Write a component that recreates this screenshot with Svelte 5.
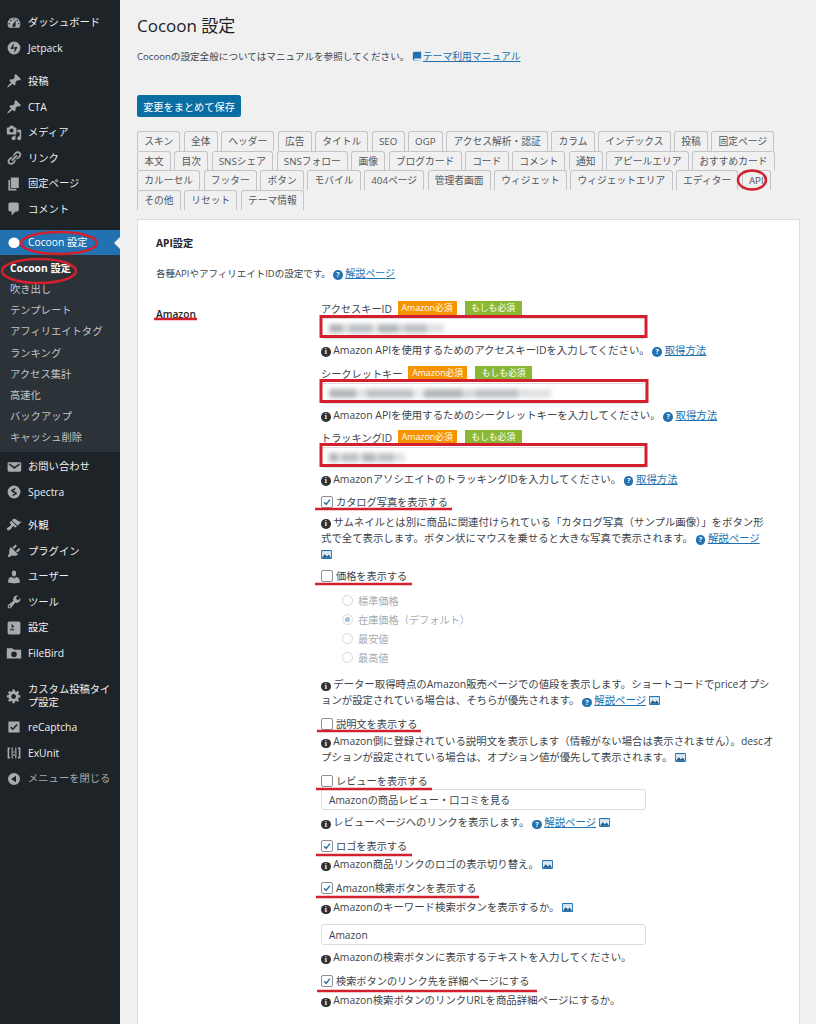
<script>
  const icons = {
    dash: 'M3.76 16h12.48c1.1-1.37 1.76-3.11 1.76-5 0-4.42-3.58-8-8-8s-8 3.58-8 8c0 1.89.66 3.63 1.76 5zM10 4c.55 0 1 .45 1 1s-.45 1-1 1-1-.45-1-1 .45-1 1-1zM6 6c.55 0 1 .45 1 1s-.45 1-1 1-1-.45-1-1 .45-1 1-1zm8 0c.55 0 1 .45 1 1s-.45 1-1 1-1-.45-1-1 .45-1 1-1zm-5.37 5.55L12 7v6c0 1.1-.9 2-2 2s-2-.9-2-2c0-.57.24-1.08.63-1.45zM4 10c.55 0 1 .45 1 1s-.45 1-1 1-1-.45-1-1 .45-1 1-1zm12 0c.55 0 1 .45 1 1s-.45 1-1 1-1-.45-1-1 .45-1 1-1z',
    jet: 'M10 2a8 8 0 1 0 0 16 8 8 0 0 0 0-16zM9.4 11.2H5.6l3.8-7.4zM10.6 16.2V8.8h3.8z',
    pin: 'M10.44 3.02l1.82-1.82 6.36 6.35-1.83 1.82c-1.05-.68-2.48-.57-3.41.36l-.75.75c-.92.93-1.04 2.35-.35 3.41l-1.83 1.82-2.41-2.41-2.8 2.79c-.42.42-3.38 2.71-3.8 2.29s1.86-3.39 2.28-3.81l2.79-2.79L4.1 9.36l1.83-1.82c1.05.69 2.48.57 3.4-.36l.75-.75c.93-.92 1.05-2.35.36-3.41z',
    media: 'M13 11V4c0-.55-.45-1-1-1h-1.67L9 1H5L3.67 3H2c-.55 0-1 .45-1 1v7c0 .55.45 1 1 1h10c.55 0 1-.45 1-1zM7 4.5c1.38 0 2.5 1.12 2.5 2.5S8.38 9.5 7 9.5 4.5 8.38 4.5 7 5.62 4.5 7 4.5zM14 6h5v10.5c0 1.38-1.12 2.5-2.5 2.5S14 17.88 14 16.5s1.12-2.5 2.5-2.5c.17 0 .34.02.5.05V9h-3V6zm-4 8.05V13h2v3.5c0 1.38-1.12 2.5-2.5 2.5S7 17.88 7 16.5 8.12 14 9.5 14c.17 0 .34.02.5.05z',
    link: 'M17.74 2.76c1.68 1.69 1.68 4.41 0 6.1l-1.53 1.52c-1.12 1.12-2.7 1.47-4.14 1.09l2.62-2.61.76-.77.76-.76c.84-.84.84-2.2 0-3.04-.84-.85-2.2-.85-3.04 0l-.77.76-3.38 3.38c-.37-1.44-.02-3.02 1.1-4.14l1.52-1.53c1.69-1.68 4.42-1.68 6.1 0zM8.59 13.43l5.34-5.34c.42-.42.42-1.1 0-1.52-.44-.43-1.13-.39-1.53 0l-5.33 5.34c-.42.42-.42 1.1 0 1.52.44.43 1.13.39 1.52 0zm-.76 2.29l4.14-4.15c.38 1.44.03 3.02-1.09 4.14l-1.52 1.53c-1.69 1.68-4.41 1.68-6.1 0-1.68-1.68-1.68-4.42 0-6.1l1.53-1.52c1.12-1.12 2.7-1.47 4.14-1.1l-4.14 4.15c-.85.84-.85 2.2 0 3.05.84.84 2.2.84 3.04 0z',
    page: 'M6 15V2h10v13H6zm-1 1h8v2H3V5h2v11z',
    comment: 'M5 2h9c1.1 0 2 .9 2 2v7c0 1.1-.9 2-2 2h-2l-5 5v-5H5c-1.1 0-2-.9-2-2V4c0-1.1.9-2 2-2z',
    dot: 'M10 3a7 6.6 0 1 0 0 13.2A7 6.6 0 0 0 10 3z',
    mail: 'M3.87 4h13.25C18.37 4 19 4.59 19 5.79v8.42c0 1.19-.63 1.79-1.88 1.79H3.87c-1.25 0-1.88-.6-1.88-1.79V5.79c0-1.2.63-1.79 1.88-1.79zm6.62 8.6l6.74-5.53c.24-.2.43-.66.13-1.07-.29-.41-.82-.42-1.17-.17l-5.7 3.86L4.8 5.83c-.35-.25-.88-.24-1.17.17-.3.41-.11.87.13 1.07z',
    spectra: 'M10 2a8 8 0 1 0 0 16 8 8 0 0 0 0-16zM6.5 9.2V7.4l5.2-2.7v2.1L9 8.2l4.5 2.6v1.8l-5.2 2.7v-2.1l2.7-1.4z',
    brush: 'M14.48 11.06L7.41 3.99l1.5-1.5c.5-.56 2.3-.47 3.51.32 1.21.8 1.43 1.28 2.91 2.1 1.18.64 2.45 1.26 4.45.85zm-.71.71L6.7 4.7 4.93 6.47c-.39.39-.39 1.02 0 1.41l1.06 1.06c.39.39.39 1.03 0 1.42-.6.6-1.43 1.11-2.21 1.69-.35.26-.7.53-1.01.84C1.43 13.23.4 14.84 1.7 16.14c1.3 1.3 2.91.27 4.25-1.07.31-.31.58-.66.84-1.01.58-.78 1.09-1.61 1.69-2.21.39-.39 1.03-.39 1.42 0l1.06 1.06c.39.39 1.02.39 1.41 0z',
    plug: 'M13.11 4.36L9.87 7.6 8 5.73l3.24-3.24c.35-.34 1.05-.2 1.56.32.52.51.66 1.21.31 1.55zm-8 1.77l.91-1.12 9.01 9.01-1.19.84c-.71.71-2.63 1.16-3.82 1.16H6.14L4.9 17.26c-.59.59-1.54.59-2.12 0-.59-.58-.59-1.53 0-2.12l1.24-1.24v-3.88c0-1.13.4-3.19 1.09-3.89zm7.26 3.97l3.24-3.24c.34-.35 1.04-.21 1.55.31.52.51.66 1.21.31 1.55l-3.24 3.25z',
    user: 'M10 9.25c-2.27 0-2.73-3.44-2.73-3.44C7 4.02 7.82 2 9.97 2c2.16 0 2.98 2.02 2.71 3.81 0 0-.41 3.44-2.68 3.44zm0 2.57L12.72 10c2.39 0 4.52 2.33 4.52 4.53v2.49s-3.65 1.13-7.24 1.13c-3.65 0-7.24-1.13-7.24-1.13v-2.49c0-2.25 1.94-4.48 4.47-4.48z',
    tool: 'M16.68 9.77c-1.34 1.34-3.3 1.67-4.95.99l-5.41 6.52c-.99.99-2.59.99-3.58 0s-.99-2.59 0-3.57l6.52-5.42c-.68-1.65-.35-3.61.99-4.95 1.28-1.28 3.12-1.62 4.72-1.06l-2.89 2.89 2.82 2.82 2.86-2.87c.53 1.58.18 3.39-1.08 4.65zM3.81 16.21c.4.39 1.04.39 1.43 0 .4-.4.4-1.04 0-1.43-.39-.4-1.03-.4-1.43 0-.39.39-.39 1.03 0 1.43z',
    set: 'M18 16V4c0-1.1-.9-2-2-2H4c-1.1 0-2 .9-2 2v12c0 1.1.9 2 2 2h12c1.1 0 2-.9 2-2zM8 11h1c.55 0 1 .45 1 1s-.45 1-1 1H8v1.5c0 .28-.22.5-.5.5s-.5-.22-.5-.5V13H6c-.55 0-1-.45-1-1s.45-1 1-1h1V5.5c0-.28.22-.5.5-.5s.5.22.5.5V7h1c.55 0 1 .45 1 1s-.45 1-1 1h-1v5.5c0 .28-.22.5-.5.5s-.5-.22-.5-.5V9z',
    folder: 'M1 4h7l2 2h9v11H1zM10 8a3.5 3.5 0 1 0 0 7 3.5 3.5 0 0 0 0-7z',
    gear: 'M18 12h-2.18c-.17.7-.44 1.35-.81 1.93l1.54 1.54-2.1 2.1-1.54-1.54c-.58.36-1.23.63-1.91.79V19H8v-2.18c-.68-.16-1.33-.43-1.91-.79l-1.54 1.54-2.12-2.12 1.54-1.54c-.36-.58-.63-1.23-.79-1.91H1V9.03h2.17c.16-.7.44-1.35.8-1.94L2.43 5.55l2.1-2.1 1.54 1.54c.58-.37 1.24-.64 1.93-.81V2h3v2.18c.68.16 1.33.43 1.91.79l1.54-1.54 2.12 2.12-1.54 1.54c.36.59.64 1.24.8 1.94H18V12zm-8.5 1.5c1.66 0 3-1.34 3-3s-1.34-3-3-3-3 1.34-3 3 1.34 3 3 3z',
    check: 'M3 3h14v14H3zM8.6 14.2l6-6.6-1.4-1.3-4.7 5.2-2-2-1.3 1.3z',
    ex: 'M2 3h3v2H4v10h1v2H2zM18 3h-3v2h1v10h-1v2h3zM7 3h1.5v14H7zM11.5 3H13v14h-1.500zM8 8h4v1.500H8zM8 12h4v1.500H8z',
    close: 'M10 2.5a7.500 7.500 0 1 0 0 15 7.500 7.500 0 0 0 0-15zM12.500 14l-6-4 6-4z'
  };
  const top1 = [['dash','ダッシュボード'],['jet','Jetpack']];
  const top2 = [['pin','投稿'],['pin','CTA'],['media','メディア'],['link','リンク'],['page','固定ページ'],['comment','コメント']];
  const subs = ['吹き出し','テンプレート','アフィリエイトタグ','ランキング','アクセス集計','高速化','バックアップ','キャッシュ削除'];
  const top3 = [['mail','お問い合わせ'],['spectra','Spectra']];
  const top4 = [['brush','外観'],['plug','プラグイン'],['user','ユーザー'],['tool','ツール'],['set','設定'],['folder','FileBird']];
  const top5 = [['check','reCaptcha'],['ex','ExUnit']];
  const tabs = ['スキン','全体','ヘッダー','広告','タイトル','SEO','OGP','アクセス解析・認証','カラム','インデックス','投稿','固定ページ','本文','目次','SNSシェア','SNSフォロー','画像','ブログカード','コード','コメント','通知','アピールエリア','おすすめカード','カルーセル','フッター','ボタン','モバイル','404ページ','管理者画面','ウィジェット','ウィジェットエリア','エディター','API','その他','リセット','テーマ情報'];
  const radios = ['標準価格','在庫価格（デフォルト）','最安値','最高値'];
  const underlines = [[154,319,197],[315,509,452],[315,584,412],[317,731,421],[316,789,432],[316,855,412],[316,897,479],[317,991,537]];
</script>

{#snippet menu(list)}
  {#each list as [ic, label]}
    <div class="item"><svg class="mi" viewBox="0 0 20 20"><path fill-rule="evenodd" d={icons[ic]} /></svg><span>{label}</span></div>
  {/each}
{/snippet}
{#snippet info()}<span class="info">i</span>{/snippet}
{#snippet q(t)}<span class="qm">?</span> <a href="#top">{t}</a>{/snippet}
{#snippet pic()}<svg class="pic" viewBox="0 0 12 10"><rect width="12" height="10" rx="1" fill="#2271b1" /><rect x="1" y="1.200" width="10" height="7.500" fill="#dbe9f3" /><path d="M1 8.700l3-4 2.500 2.500L8.500 5l2.500 3.700z" fill="#1a5a8c" /></svg>{/snippet}
{#snippet check(label, on)}
  <div class="check"><span class="box">{#if on}<svg viewBox="0 0 12 12"><path d="M2.500 6.200l2.500 2.600 4.500-5.600" fill="none" stroke="#2271b1" stroke-width="1.700" /></svg>{/if}</span>{label}</div>
{/snippet}
{#snippet badges()}<span class="badge orange">Amazon必須</span><span class="badge green">もしも必須</span>{/snippet}

<div class="page">
  <nav class="side">
    <div class="grp first">{@render menu(top1)}</div>
    <div class="grp">{@render menu(top2)}</div>
    <div class="grp">
      <div class="item current"><svg class="mi" viewBox="0 0 20 20"><path d={icons.dot} /></svg><span>Cocoon 設定</span><i class="arrow"></i></div>
      <div class="sub">
        <div class="subitem on">Cocoon 設定</div>
        {#each subs as s}<div class="subitem">{s}</div>{/each}
      </div>
    </div>
    <div class="grp tight">{@render menu(top3)}</div>
    <div class="grp">{@render menu(top4)}</div>
    <div class="grp last">
      <div class="item two"><svg class="mi" viewBox="0 0 20 20"><path fill-rule="evenodd" d={icons.gear} /></svg><span>カスタム投稿タイプ設定</span></div>
      {@render menu(top5)}
      <div class="item dim"><svg class="mi" viewBox="0 0 20 20"><path fill-rule="evenodd" d={icons.close} /></svg><span>メニューを閉じる</span></div>
    </div>
  </nav>

  <main class="main">
    <h1>Cocoon 設定</h1>
    <p class="lead">Cocoonの設定全般についてはマニュアルを参照してください。 <svg class="book" viewBox="0 0 12 12"><path d="M3 1h8v8H3.500C2.700 9 2.500 9.500 2.500 10s.3 1 1 1H11v.5H3C2 11.500 1 11 1 9.800V3c0-1.200 1-2 2-2z" fill="#2271b1" /></svg><a href="#top">テーマ利用マニュアル</a></p>
    <button class="save">変更をまとめて保存</button>
    <div class="tabs">
      {#each tabs as t}<span class="tab">{t}</span>{/each}
    </div>
    <section class="card">
      <h2>API設定</h2>
      <p class="intro">各種APIやアフィリエイトIDの設定です。 {@render q('解説ページ')}</p>
      <div class="grid">
        <div class="th">Amazon</div>
        <div class="col">
          <div class="lab">アクセスキーID {@render badges()}</div>
          <div class="input"><i class="blur b1"></i></div>
          <div class="help h3">{@render info()} Amazon APIを使用するためのアクセスキーIDを入力してください。 {@render q('取得方法')}</div>
          <div class="lab m8">シークレットキー {@render badges()}</div>
          <div class="input"><i class="blur b2"></i></div>
          <div class="help h3">{@render info()} Amazon APIを使用するためのシークレットキーを入力してください。 {@render q('取得方法')}</div>
          <div class="lab m7">トラッキングID {@render badges()}</div>
          <div class="input"><i class="blur b3"></i></div>
          <div class="help h3">{@render info()} AmazonアソシエイトのトラッキングIDを入力してください。 {@render q('取得方法')}</div>

          <div class="m7">{@render check('カタログ写真を表示する', true)}</div>
          <div class="help h4">{@render info()} サムネイルとは別に商品に関連付けられている「カタログ写真（サンプル画像）」をボタン形<br />式で全て表示します。ボタン状にマウスを乗せると大きな写真で表示されます。 {@render q('解説ページ')}<br />{@render pic()}</div>

          <div class="m6">{@render check('価格を表示する', false)}</div>
          <div class="radios">
            {#each radios as r, i}
              <div class="radio"><span class="rd" class:sel={i === 1}></span>{r}</div>
            {/each}
          </div>
          <div class="help h9">{@render info()} データー取得時点のAmazon販売ページでの値段を表示します。ショートコードでpriceオプシ<br />ョンが設定されている場合は、そちらが優先されます。 {@render q('解説ページ')} {@render pic()}</div>

          <div class="m8">{@render check('説明文を表示する', false)}</div>
          <div class="help h1">{@render info()} Amazon側に登録されている説明文を表示します（情報がない場合は表示されません）。descオ<br />プションが設定されている場合は、オプション値が優先して表示されます。 {@render pic()}</div>

          <div class="m8">{@render check('レビューを表示する', false)}</div>
          <div class="input tight">Amazonの商品レビュー・口コミを見る</div>
          <div class="help h4">{@render info()} レビューページへのリンクを表示します。 {@render q('解説ページ')} {@render pic()}</div>

          <div class="m8">{@render check('ロゴを表示する', true)}</div>
          <div class="help h2">{@render info()} Amazon商品リンクのロゴの表示切り替え。 {@render pic()}</div>

          <div class="m8">{@render check('Amazon検索ボタンを表示する', true)}</div>
          <div class="help h3">{@render info()} Amazonのキーワード検索ボタンを表示するか。 {@render pic()}</div>
          <div class="input far">Amazon</div>
          <div class="help h4">{@render info()} Amazonの検索ボタンに表示するテキストを入力してください。</div>

          <div class="m8">{@render check('検索ボタンのリンク先を詳細ページにする', true)}</div>
          <div class="help h3">{@render info()} Amazon検索ボタンのリンクURLを商品詳細ページにするか。</div>
        </div>
      </div>
    </section>
  </main>

  <svg class="marks" viewBox="0 0 816 1024" aria-hidden="true">
    <g fill="none" stroke="#d3202e">
      <ellipse cx="59" cy="243" rx="38" ry="11" stroke-width="2.500" />
      <ellipse cx="39" cy="271" rx="37" ry="12" stroke-width="2.500" />
      <ellipse cx="752" cy="180" rx="14" ry="9.500" stroke-width="2.500" />
      <rect x="321" y="316.500" width="325" height="20" stroke-width="3" />
      <rect x="321" y="380.500" width="326" height="21" stroke-width="3" />
      <rect x="321" y="444.500" width="325" height="21" stroke-width="3" />
      {#each underlines as [x, y, e]}
        <path d="M{x} {y}H{e}" stroke-width="2.500" />
      {/each}
    </g>
  </svg>
</div>

<style>
  :global(body) { margin: 0; background: #f0f0f1; }
  .page {
    position: relative; display: flex; width: 816px; height: 1024px; overflow: hidden;
    font-family: "Open Sans", "Noto Sans CJK JP", sans-serif; font-size: 10.2px; color: #3c434a;
  }
  a { color: #2271b1; text-decoration: underline; }
  .side { width: 120px; flex: none; background: #1d2327; padding-top: 10px; color: #eef0f1; font-size: 10.300px; }
  .grp { margin-top: 7.500px; }
  .grp.first { margin-top: 0; }
  .grp.tight { margin-top: 2px; }
  .grp.last { margin-top: 10.500px; }
  .item { position: relative; display: flex; align-items: center; gap: 6px; height: 25.600px; padding-left: 6px; line-height: 13px; }
  .item.two { height: 38px; padding-right: 8px; }
  .item.two span { width: 85px; }
  .mi { width: 16px; height: 16px; flex: none; fill: #a7aaad; }
  .item.current { background: #2271b1; color: #fff; }
  .item.current .mi { fill: #fff; }
  .arrow { position: absolute; right: 0; top: 7px; border: 6px solid transparent; border-right-color: #f0f0f1; border-left: 0; }
  .item.dim { color: #a7aaad; }
  .sub { background: #2c3338; padding: 2.500px 0 3.400px 10px; color: #c3c4c7; }
  .subitem { height: 21.200px; line-height: 21.200px; }
  .subitem.on { color: #fff; font-weight: 700; }

  .main { flex: 1; min-width: 0; padding: 0 16px 0 17px; }
  h1 { margin: 14px 0 0; font-size: 17px; font-weight: 400; line-height: 24px; color: #1d2327; }
  .lead { margin: 11px 0 0; line-height: 16px; font-size: 9.600px; }
  .lead a { font-size: 9.800px; }
  .book { width: 10px; height: 10px; vertical-align: -1px; margin-right: 1px; }
  .save { display: block; margin-top: 30px; width: 104px; height: 22px; padding: 0; border: 0; border-radius: 2.500px; background: #0b6ea3; color: #fff; font: inherit; }
  .tabs { display: flex; flex-wrap: wrap; column-gap: 3.400px; margin-top: 14px; font-size: 9.750px; }
  .tab {
    height: 19.700px; line-height: 19px; padding: 0 6.200px; box-sizing: border-box; white-space: nowrap;
    border: 1px solid #c3c4c7; border-bottom: 0; border-radius: 3px 3px 0 0; color: #50575e;
  }
  .card { margin-top: 9px; height: 900px; box-sizing: border-box; padding: 15px 18px; background: #fff; border: 1px solid #dcdcde; }
  h2 { margin: 0; font-size: 10.200px; font-weight: 700; line-height: 16px; color: #1d2327; }
  .intro { margin: 14px 0 0; line-height: 16px; font-size: 9.500px; }
  .intro a { font-size: 10px; }
  .grid { display: grid; grid-template-columns: 165px 460px; margin-top: 19px; }
  .th { font-weight: 600; color: #1d2327; line-height: 16px; margin-top: 5px; }
  .col { line-height: 16px; }
  .lab { height: 16px; white-space: nowrap; }
  .m6 { margin-top: 6px; }
  .m7 { margin-top: 7px; }
  .m8 { margin-top: 8px; }
  .badge { display: inline-block; height: 15px; line-height: 15px; padding: 0 4px; margin-right: 8px; color: #fff; font-size: 8.800px; vertical-align: 2px; }
  .orange { background: #f59300; margin-left: 3px; }
  .green { background: #8ab833; padding: 0 6.500px; }
  .input { height: 21px; box-sizing: border-box; width: 325px; margin-top: 1px; padding: 0 7px; display: flex; align-items: center; background: #fff; border: 1px solid #dcdcde; border-radius: 3px; }
  .input.tight { margin-top: 0; }
  .input.far { margin-top: 9px; }
  .blur { display: block; height: 9px; filter: blur(2px); opacity: .75; background: linear-gradient(90deg, #9aa0a6 0 12%, #d6d8da 12% 17%, #a8adb2 17% 38%, #e3e5e6 38% 43%, #9aa0a6 43% 60%, #c8cbce 60% 66%, #a8adb2 66% 85%, #d6d8da 85%); }
  .b1 { width: 115px; }
  .b2 { width: 222px; }
  .b3 { width: 76px; }
  .help { font-size: 10.400px; }
  .h1 { margin-top: 1px; }
  .h2 { margin-top: 2px; }
  .h3 { margin-top: 3px; }
  .h4 { margin-top: 4px; }
  .h9 { margin-top: 9px; }
  .info { display: inline-block; width: 9.500px; height: 9.500px; border-radius: 50%; background: #2c3338; color: #fff; font-size: 7.500px; font-weight: 700; line-height: 9.500px; text-align: center; vertical-align: -0.500px; font-family: "Liberation Serif", serif; }
  .qm { display: inline-block; width: 9.500px; height: 9.500px; border-radius: 50%; background: #2271b1; color: #fff; font-size: 7px; font-weight: 700; line-height: 9.500px; text-align: center; vertical-align: -0.500px; }
  .pic { width: 11px; height: 9px; vertical-align: -1px; }
  .check { display: flex; align-items: center; gap: 3px; height: 16px; }
  .box { width: 10px; height: 10px; flex: none; background: #fff; border: 1px solid #8c8f94; border-radius: 2px; display: block; }
  .box svg { display: block; width: 10px; height: 10px; }
  .radios { margin-top: 7.500px; padding-left: 21px; color: #a7aaad; }
  .radio { display: flex; align-items: center; gap: 5px; height: 19px; }
  .rd { width: 9px; height: 9px; flex: none; box-sizing: content-box; border: 1px solid #d5d7d9; border-radius: 50%; background: #fff; position: relative; }
  .rd.sel::after { content: ""; position: absolute; inset: 2px; background: #9ec3dd; border-radius: 50%; }
  .marks { position: absolute; left: 0; top: 0; width: 816px; height: 1024px; pointer-events: none; }
</style>
